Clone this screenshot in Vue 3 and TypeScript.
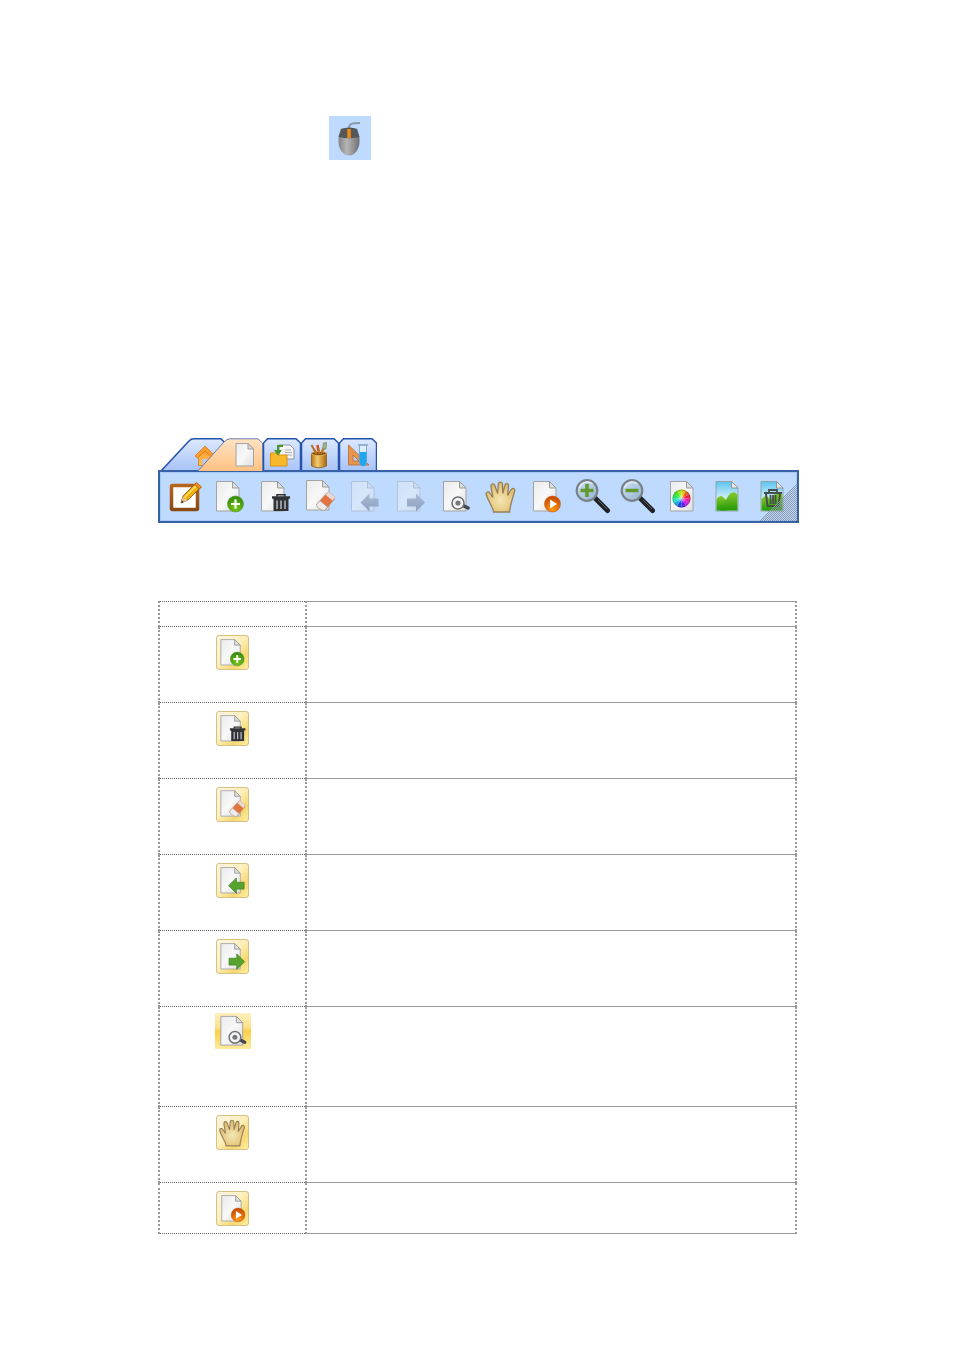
<script setup lang="ts">
interface Tab {
  id: string
  label: string
  width: number
  outline: string
  kind: 'home' | 'page' | 'plain'
}

interface Tool {
  icon: string
  label: string
}

interface Row extends Tool {
  size: 'short' | 'normal' | 'tall'
  flat?: boolean
}

const plainOutline = 'M.5 34V5L4.500 .8H33L37.500 5V34'

const tabs: Tab[] = [
  { id: 'tab-home', label: 'Home', width: 67, kind: 'home', outline: 'M2 33L30 3Q32 .8 35 .8H62L66 5V34H2Z' },
  { id: 'tab-page', label: 'Page', width: 67, kind: 'page', outline: 'M1 34L28 4Q31 .8 34 .8H62L66.500 5V34' },
  { id: 'tab-resources', label: 'Resources', width: 38, kind: 'plain', outline: plainOutline },
  { id: 'tab-drawing', label: 'Drawing', width: 38, kind: 'plain', outline: plainOutline },
  { id: 'tab-subjects', label: 'Subjects', width: 38, kind: 'plain', outline: plainOutline },
]

const tools: Tool[] = [
  { icon: 'board', label: 'Edit board' },
  { icon: 'add', label: 'Add page' },
  { icon: 'trash', label: 'Delete page' },
  { icon: 'erase', label: 'Clear page' },
  { icon: 'prev', label: 'Previous page' },
  { icon: 'next', label: 'Next page' },
  { icon: 'preview', label: 'Page preview' },
  { icon: 'hand', label: 'Move page' },
  { icon: 'play', label: 'Play back page' },
  { icon: 'zoom-in', label: 'Zoom in' },
  { icon: 'zoom-out', label: 'Zoom out' },
  { icon: 'colour', label: 'Background colour' },
  { icon: 'picture', label: 'Background picture' },
  { icon: 'picture-trash', label: 'Remove background' },
]

const rows: Row[] = [
  { icon: 'add', label: 'Add page', size: 'normal' },
  { icon: 'trash', label: 'Delete page', size: 'normal' },
  { icon: 'erase', label: 'Clear page', size: 'normal' },
  { icon: 'prev-green', label: 'Previous page', size: 'normal' },
  { icon: 'next-green', label: 'Next page', size: 'normal' },
  { icon: 'preview', label: 'Page preview', size: 'tall', flat: true },
  { icon: 'hand', label: 'Move page', size: 'normal' },
  { icon: 'play', label: 'Play back page', size: 'short' },
]

const wedgeCount = 12
const wedges = Array.from({ length: wedgeCount }, (_, i) => {
  const point = (n: number) => {
    const a = (n / wedgeCount) * Math.PI * 2 - Math.PI / 2
    return `${(21.5 + 9 * Math.cos(a)).toFixed(2)} ${(23.5 + 9 * Math.sin(a)).toFixed(2)}`
  }
  return {
    d: `M21.5 23.5L${point(i)}A9 9 0 0 1 ${point(i + 1)}Z`,
    fill: `hsl(${(50 - i * 30 + 360) % 360} 85% 50%)`,
  }
})
</script>

<template>
  <svg class="defs" aria-hidden="true">
    <defs>
      <linearGradient id="g-paper" x1="0" y1="0" x2="1" y2="1">
        <stop offset="0" stop-color="#ebebeb" /><stop offset=".5" stop-color="#f8f8f8" /><stop offset="1" stop-color="#dedede" />
      </linearGradient>
      <linearGradient id="g-tab" x1="0" y1="0" x2="0" y2="1">
        <stop offset="0" stop-color="#dce8ff" /><stop offset="1" stop-color="#a6c2f7" />
      </linearGradient>
      <linearGradient id="g-tab-on" x1="0" y1="0" x2="0" y2="1">
        <stop offset="0" stop-color="#ffe3c4" /><stop offset="1" stop-color="#ffc080" />
      </linearGradient>
      <linearGradient id="g-wood" x1="0" y1="0" x2="0" y2="1">
        <stop offset="0" stop-color="#b5651b" /><stop offset="1" stop-color="#8a4a16" />
      </linearGradient>
      <radialGradient id="g-green" cx=".5" cy=".75" r=".7">
        <stop offset="0" stop-color="#7ccb18" /><stop offset="1" stop-color="#338a0a" />
      </radialGradient>
      <radialGradient id="g-orange" cx=".5" cy=".85" r=".8">
        <stop offset="0" stop-color="#ff9a10" /><stop offset="1" stop-color="#c84a04" />
      </radialGradient>
      <radialGradient id="g-hand" cx=".5" cy=".6" r=".6">
        <stop offset="0" stop-color="#f3e8b6" /><stop offset="1" stop-color="#dfb865" />
      </radialGradient>
      <linearGradient id="g-sky" x1="0" y1="0" x2="0" y2="1">
        <stop offset="0" stop-color="#5cc4f0" /><stop offset=".6" stop-color="#d8f2fb" />
      </linearGradient>
      <linearGradient id="g-hill" x1="0" y1="0" x2="0" y2="1">
        <stop offset="0" stop-color="#8ac92e" /><stop offset="1" stop-color="#239a08" />
      </linearGradient>
      <linearGradient id="g-arrow" x1="0" y1="0" x2="0" y2="1">
        <stop offset="0" stop-color="#a9bad5" /><stop offset="1" stop-color="#8ca0c0" />
      </linearGradient>
      <linearGradient id="g-lens" x1="0" y1="0" x2="1" y2="1">
        <stop offset="0" stop-color="#cfe2f4" /><stop offset="1" stop-color="#93b2d0" />
      </linearGradient>
      <linearGradient id="g-mouse" x1="0" y1="0" x2="1" y2="0">
        <stop offset="0" stop-color="#858585" /><stop offset=".4" stop-color="#b5b5b5" /><stop offset="1" stop-color="#707070" />
      </linearGradient>
      <linearGradient id="g-gold" x1="0" y1="0" x2="1" y2="0">
        <stop offset="0" stop-color="#b87818" /><stop offset=".4" stop-color="#f4cc6c" /><stop offset="1" stop-color="#a86810" />
      </linearGradient>
      <linearGradient id="g-home" x1="0" y1="0" x2="0" y2="1">
        <stop offset="0" stop-color="#ff9a28" /><stop offset="1" stop-color="#ffc060" />
      </linearGradient>
      <radialGradient id="g-wheel">
        <stop offset="0" stop-color="#fff" stop-opacity=".5" /><stop offset=".6" stop-color="#fff" stop-opacity="0" /><stop offset="1" stop-color="#222" stop-opacity=".35" />
      </radialGradient>
      <pattern id="p-grip" width="2" height="2" patternUnits="userSpaceOnUse">
        <path d="M0 0h1v1H0zM1 1h1v1H1z" fill="#8c98ac" />
      </pattern>

      <g id="paper">
        <path d="M8.500 6.500H24.500L31 13V36H8.500Z" fill="url(#g-paper)" stroke="#a3a3a3" />
        <path d="M24.500 6.500V13H31Z" fill="#dedede" stroke="#9b9b9b" />
      </g>
      <g id="bin">
        <path d="M20.500 23H35.500V36H20.500Z" fill="#303236" />
        <path d="M19 22.500H37" stroke="#303236" stroke-width="2.500" />
        <path d="M24 21.500V19.800H32V21.500" fill="none" stroke="#303236" stroke-width="1.500" />
        <path d="M24 25.500V34M28 25.500V34M32 25.500V34" stroke="#b5bac2" stroke-width="1.500" />
      </g>
      <path id="arrow-left" d="M17.500 27.500L26.500 18.500V23.500H35.500V31.500H26.500V36.500Z" />
      <path id="arrow-right" d="M36 27.500L27 18.500V23.500H18V31.500H27V36.500Z" />
      <g id="lens">
        <path d="M25 23L37.500 35.500" stroke="#202225" stroke-width="5" stroke-linecap="round" />
        <path d="M28 25L37 34" stroke="#606468" stroke-width="1" />
        <circle cx="17" cy="15.500" r="10.300" fill="url(#g-lens)" stroke="#7a8288" stroke-width="2.200" />
        <path d="M9.500 13A8 8 0 0 1 22.500 9" fill="none" stroke="#e8f2fb" stroke-width="1.200" />
      </g>
      <g id="landscape">
        <path d="M11 6.500H26.500L33 13V36H11Z" fill="url(#g-sky)" stroke="#94a3a8" />
        <path d="M11.500 24Q15 19.500 18 22Q20 23.500 21.500 26V35.500H11.500Z" fill="url(#g-hill)" />
        <path d="M15 35.500Q20 26 23.500 20.500Q28 14.500 32.500 19.500V35.500Z" fill="url(#g-hill)" />
        <path d="M26.500 6.500V13H33Z" fill="#e8e8e8" stroke="#949494" />
      </g>

      <symbol id="board" viewBox="0 0 44 44">
        <rect x="8.500" y="10.500" width="26" height="24" rx="1" fill="#fff" stroke="url(#g-wood)" stroke-width="3.500" />
        <path d="M18 28L20 21L33 8L38 12L25 25Z" fill="#f8ac10" stroke="#7c5208" stroke-width=".8" />
        <path d="M21.500 22.500L34 10" stroke="#ffe35a" stroke-width="1.600" />
        <path d="M31.500 9.500L33.500 7.500L38.500 12L36.500 14Z" fill="#f59416" stroke="#964c08" stroke-width=".7" />
        <path d="M18 28L20 21.500L24.500 25.500Z" fill="#e6bf94" /><path d="M18 28L19 25.500L20.800 27Z" fill="#442710" />
      </symbol>
      <symbol id="add" viewBox="0 0 44 44">
        <use href="#paper" />
        <circle cx="27.500" cy="29" r="8" fill="url(#g-green)" stroke="#5e9c30" stroke-width=".6" />
        <path d="M27.500 24.500V33.500M23 29H32" stroke="#fff" stroke-width="2.200" />
      </symbol>
      <symbol id="trash" viewBox="0 0 44 44"><use href="#paper" /><use href="#bin" /></symbol>
      <symbol id="erase" viewBox="0 0 44 44">
        <use href="#paper" y="-1" />
        <path d="M18.500 29.500L29 18L36.500 24L26 36Z" fill="#e4743f" stroke="#b3775b" stroke-width=".7" />
        <path d="M18.500 29.500L22 25.700L29.500 32L26 36L19.500 32.500Z" fill="#f0ebe8" stroke="#a59c96" stroke-width=".7" />
        <path d="M27.500 19.800L30.500 16.800L37 22L34.800 25.800Z" fill="#ead9d0" stroke="#c0a79b" stroke-width=".5" />
      </symbol>
      <symbol id="prev" viewBox="0 0 44 44">
        <use href="#paper" opacity=".42" /><use href="#arrow-left" fill="url(#g-arrow)" />
      </symbol>
      <symbol id="next" viewBox="0 0 44 44">
        <use href="#paper" opacity=".42" /><use href="#arrow-right" fill="url(#g-arrow)" />
      </symbol>
      <symbol id="prev-green" viewBox="0 0 44 44">
        <use href="#paper" /><use href="#arrow-left" fill="#58a32d" stroke="#3f7d20" stroke-width=".8" />
      </symbol>
      <symbol id="next-green" viewBox="0 0 44 44">
        <use href="#paper" /><use href="#arrow-right" fill="#58a32d" stroke="#3f7d20" stroke-width=".8" />
      </symbol>
      <symbol id="preview" viewBox="0 0 44 44">
        <use href="#paper" x="1" />
        <path d="M28 30L34 33" stroke="#44474a" stroke-width="3.500" stroke-linecap="round" />
        <circle cx="24" cy="28" r="6" fill="#f6f6f6" stroke="#6d6f72" stroke-width="1.500" />
        <circle cx="24" cy="28" r="2.600" fill="#76797c" />
      </symbol>
      <symbol id="hand" viewBox="0 0 44 44">
        <path d="M14.500 37C14.500 33 9.500 27 7.200 19.500C6.700 16.800 9.500 16 10.800 18L13.800 22.500C13.300 18 12 13 12 10.500C12.300 8.300 15 8.200 15.800 10.500L18.600 18.500L19.300 9C19.600 6.600 23.200 6.600 23.500 9L23.800 18.500L26 10C26.800 7.700 29.700 8.300 29.500 10.800L28.700 20.500L32.200 14.500C33.500 12.300 36.500 13.500 35.700 16.200C33.500 23 31 32 30.500 37Z" fill="url(#g-hand)" stroke="#95805a" stroke-width="1.300" />
      </symbol>
      <symbol id="play" viewBox="0 0 44 44">
        <use href="#paper" x="1" />
        <circle cx="28.500" cy="29" r="8" fill="url(#g-orange)" stroke="#c86014" stroke-width=".6" />
        <path d="M26 24.500L33 29L26 33.500Z" fill="#fff" />
      </symbol>
      <symbol id="zoom-in" viewBox="0 0 44 44">
        <use href="#lens" /><path d="M17 9V22M10.500 15.500H23.500" stroke="#62982c" stroke-width="3.500" />
      </symbol>
      <symbol id="zoom-out" viewBox="0 0 44 44">
        <use href="#lens" /><path d="M10.500 15.500H23.500" stroke="#62982c" stroke-width="3.500" />
      </symbol>
      <symbol id="colour" viewBox="0 0 44 44">
        <use href="#paper" x="2" />
        <path v-for="w in wedges" :key="w.d" :d="w.d" :fill="w.fill" />
        <circle cx="21.500" cy="23.500" r="9" fill="url(#g-wheel)" />
      </symbol>
      <symbol id="picture" viewBox="0 0 44 44"><use href="#landscape" /></symbol>
      <symbol id="picture-trash" viewBox="0 0 44 44">
        <use href="#landscape" />
        <path d="M16 19L17.500 31H28.500L30 19" fill="none" stroke="#464f4c" stroke-width="2" />
        <path d="M14 18H32M19 17V15H27V17M20.500 20V29M23 20V29M25.500 20V29" fill="none" stroke="#464f4c" stroke-width="1.800" />
      </symbol>

      <g id="tab-home">
        <path d="M39.500 17V27.500H53V17L46 10Z" fill="url(#g-home)" stroke="#d08a34" />
        <path d="M36 18L46 8L56 18L53.500 20L46 13L38.500 20Z" fill="#ff9d2c" stroke="#d37a18" stroke-width=".8" />
        <path d="M43.500 28V21H48.500V28Z" fill="#b9c9ee" />
      </g>
      <g id="tab-page">
        <path d="M40 5.500H52L57.500 11V28H40Z" fill="url(#g-paper)" stroke="#a6a29e" />
        <path d="M52 5.500V11H57.500Z" fill="#dcdcdc" stroke="#a19d99" />
      </g>
      <g id="tab-resources">
        <path d="M16 7H27L31 11V21H16Z" fill="#f4f4f4" stroke="#8e969f" />
        <path d="M22 12H28M22 14.500H29M22 17H29" stroke="#a9b0b8" />
        <path d="M7.500 15H13L15 17H24V28H7.500Z" fill="#f8b82c" stroke="#dc9410" />
        <path d="M20 8H15V13" fill="none" stroke="#45962c" stroke-width="2" />
        <path d="M11 12H19L15 17.500Z" fill="#45962c" />
      </g>
      <g id="tab-drawing">
        <path d="M16 17L10.500 7" stroke="#b47428" stroke-width="2" />
        <path d="M18 17L16.500 7" stroke="#dc4b18" stroke-width="2.500" />
        <path d="M19 17L23 10" stroke="#d29234" stroke-width="2.500" />
        <path d="M21.500 11L22.500 5L25.500 4.500L25 11Z" fill="#a9b47c" stroke="#69866c" stroke-width=".7" />
        <path d="M10.500 15V28Q18 31.500 25.500 28V15Z" fill="url(#g-gold)" stroke="#8e5b10" stroke-width=".8" />
        <ellipse cx="18" cy="15.500" rx="7.500" ry="2" fill="#7b4b0c" stroke="#e3b558" />
        <path d="M15.500 16L13 11M18 16L17.500 10M20 16L22 11" stroke="#c07226" stroke-width="1.800" />
      </g>
      <g id="tab-subjects">
        <path d="M9.500 7V27H30ZM14 17L20 23H14Z" fill="#e8944a" fill-rule="evenodd" stroke="#bb682a" stroke-width=".8" />
        <path d="M20.500 7V24Q20.500 28 24 28Q27.500 28 27.500 24V7Z" fill="#dceefc" fill-opacity=".9" stroke="#86a9cc" />
        <path d="M20.500 14H27.500V24Q27.500 28 24 28Q20.500 28 20.500 24Z" fill="#20a6ee" />
        <path d="M19 7H29" stroke="#8ea9c9" stroke-width="1.500" />
      </g>
    </defs>
  </svg>

  <main class="page">
    <svg class="mouse" viewBox="0 0 42 44" role="img" aria-label="Mouse">
      <path d="M20 12C20 7 24 7 31 7" fill="none" stroke="#8b98a8" stroke-width="2" />
      <path d="M9.500 22L12 13Q20 10 28 13L30.500 22V26C30.500 33 26 39.500 20 39.500S9.500 33 9.500 26Z" fill="url(#g-mouse)" />
      <path d="M9.500 21L12 13Q20 10 28 13L30.500 21Q20 23.500 9.500 21Z" fill="#555759" />
      <path d="M18.300 13H21.800V22H18.300Z" fill="#f58a12" />
    </svg>

    <section class="toolbox" aria-label="Page tools">
      <div class="tabs" role="tablist">
        <button
          v-for="tab in tabs"
          :key="tab.id"
          type="button"
          role="tab"
          class="tab"
          :class="tab.kind"
          :aria-label="tab.label"
          :aria-selected="tab.kind === 'page'"
        >
          <svg :viewBox="`0 0 ${tab.width} 33`" :width="tab.width" height="33">
            <path class="shape" :d="tab.outline" />
            <use :href="`#${tab.id}`" />
          </svg>
        </button>
      </div>
      <div class="toolbar" role="toolbar" aria-label="Page">
        <button v-for="tool in tools" :key="tool.icon" type="button" class="tool" :aria-label="tool.label">
          <svg width="44" height="44"><use :href="`#${tool.icon}`" /></svg>
        </button>
        <svg class="grip" viewBox="0 0 38 38" aria-hidden="true"><path d="M38 0V38H0Z" fill="url(#p-grip)" /></svg>
      </div>
    </section>

    <table class="guide">
      <thead>
        <tr class="head"><td></td><td></td></tr>
      </thead>
      <tbody>
        <tr v-for="row in rows" :key="row.icon" :class="row.size">
          <td>
            <svg class="tile" :class="{ flat: row.flat }" viewBox="4 3 36 37" role="img" :aria-label="row.label">
              <use :href="`#${row.icon}`" width="44" height="44" />
            </svg>
          </td>
          <td></td>
        </tr>
      </tbody>
    </table>
  </main>
</template>

<style>
body {
  margin: 0;
  background: #fff;
}
</style>

<style scoped>
.defs {
  position: absolute;
  width: 0;
  height: 0;
}
.page {
  padding: 116px 155px 116px 158px;
  font-family: "Liberation Sans", sans-serif;
}
.mouse {
  display: block;
  width: 42px;
  height: 44px;
  margin-left: 171px;
  background: #bedaff;
}
.toolbox {
  margin-top: 278px;
}
.tabs {
  display: flex;
  padding-left: 1px;
  margin-bottom: -1px;
}
.tab {
  display: block;
  flex: none;
  padding: 0;
  border: 0;
  background: none;
}
.tab svg {
  display: block;
}
.shape {
  fill: url(#g-tab);
  stroke: #2352ad;
  stroke-width: 1.5px;
}
.tab.page {
  position: relative;
  z-index: 1;
  margin-left: -30px;
}
.tab.page .shape {
  fill: url(#g-tab-on);
  stroke: #6d7cae;
  stroke-width: 1px;
}
.toolbar {
  position: relative;
  display: grid;
  grid-template-columns: repeat(14, 1fr);
  padding: 0 2px;
  border: 2px solid #3762a8;
  background: #bedaff;
  box-shadow: inset 0 0 0 1px #a9c9f5;
}
.tool {
  display: flex;
  justify-content: center;
  min-width: 0;
  padding: 3px 0 2px;
  border: 0;
  background: none;
}
.tool svg {
  flex: none;
}
.grip {
  position: absolute;
  right: 0;
  bottom: 0;
  width: 38px;
  height: 38px;
  pointer-events: none;
}
.guide {
  width: calc(100% - 2px);
  margin-top: 78px;
  border-collapse: collapse;
  table-layout: fixed;
}
.guide td {
  box-sizing: border-box;
  padding: 8px 0 0;
  border: 1px dotted #666;
  border-right: 2px dotted #999;
  border-left: 2px dotted #999;
  text-align: center;
  vertical-align: top;
}
.guide td:first-child {
  width: 147px;
}
.guide td + td {
  border-top: 1px solid #999;
  border-bottom: 1px solid #999;
}
.guide .head td {
  height: 25px;
  padding: 0;
}
.normal td {
  height: 76px;
}
.tall td {
  height: 100px;
}
.tall td:first-child {
  padding-top: 6px;
}
.short td {
  height: 51px;
}
.tile {
  display: block;
  box-sizing: border-box;
  width: 33px;
  height: 35px;
  margin: 0 auto;
  border: 1px solid #d8bf84;
  border-radius: 3px;
  background: linear-gradient(135deg, #fbf4df 0%, #fdf0be 45%, #f7d870 75%, #fdf0a4 100%);
}
.tile.flat {
  width: 36px;
  height: 36px;
  border: 0;
  border-radius: 0;
  background: linear-gradient(#fdf0bd 0%, #fce28a 40%, #fbcf47 50%, #fdea9c 100%);
}
</style>
